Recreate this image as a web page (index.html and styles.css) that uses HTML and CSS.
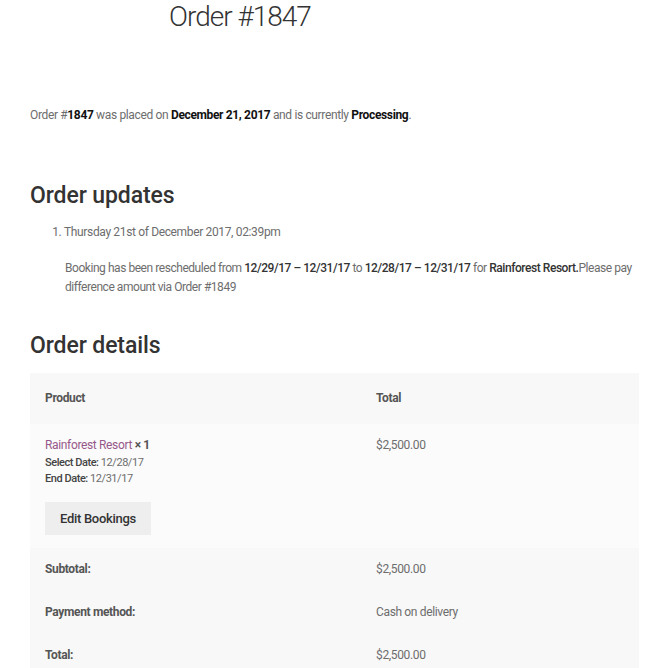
FILE: index.html
```html
<!DOCTYPE html>
<html lang="en">

<head>
    <meta charset="UTF-8">
    <meta name="viewport" content="width=device-width, initial-scale=1.0">
    <title>Order #1847</title>
    <link rel="stylesheet" href="styles.css">
</head>

<body>

    <header class="entry-header">
        <h1 class="entry-title">Order #1847</h1>
    </header>

    <div class="entry-content">
        <p class="order-status">Order #<mark>1847</mark> was placed on <mark>December 21, 2017</mark> and is currently <mark>Processing</mark>.</p>

        <h2 class="section-title">Order updates</h2>
        <ol class="order-notes">
            <li class="note">
                <p class="note-meta">Thursday 21st of December 2017, 02:39pm</p>
                <p class="note-text">Booking has been rescheduled from <strong>12/29/17 &ndash; 12/31/17</strong> to <strong>12/28/17 &ndash; 12/31/17</strong> for <strong>Rainforest Resort.</strong>Please pay difference amount via Order #1849</p>
            </li>
        </ol>

        <h2 class="section-title section-title--details">Order details</h2>
        <table class="order-table">
            <thead>
                <tr>
                    <th class="col-product">Product</th>
                    <th class="col-total">Total</th>
                </tr>
            </thead>
            <tbody>
                <tr class="order-item">
                    <td>
                        <a href="#" class="product-link">Rainforest Resort</a> <strong class="qty">&times;&nbsp;1</strong>
                        <ul class="item-meta">
                            <li><strong>Select Date:</strong> 12/28/17</li>
                            <li><strong>End Date:</strong> 12/31/17</li>
                        </ul>
                        <button type="button" class="btn">Edit Bookings</button>
                    </td>
                    <td><span class="amount">$2,500.00</span></td>
                </tr>
            </tbody>
            <tfoot>
                <tr>
                    <th>Subtotal:</th>
                    <td><span class="amount">$2,500.00</span></td>
                </tr>
                <tr>
                    <th>Payment method:</th>
                    <td>Cash on delivery</td>
                </tr>
                <tr>
                    <th>Total:</th>
                    <td><span class="amount">$2,500.00</span></td>
                </tr>
            </tfoot>
        </table>
    </div>

</body>

</html>
```

FILE: styles.css
```css
/* General Styles */
* {
    margin: 0;
    padding: 0;
    box-sizing: border-box;
}

body {
    font-family: "Roboto", "Noto Sans", sans-serif;
    font-size: 12px;
    line-height: 19px;
    letter-spacing: -0.35px;
    color: #6d6d6d;
    background: #fff;
    padding: 0 7px 0 30px;
}

strong, mark {
    background: none;
    font-weight: 700;
    color: #333;
}

/* Page title */
.entry-title {
    font-weight: 300;
    font-size: 28px;
    line-height: 36px;
    letter-spacing: -1px;
    color: #333;
    margin-left: 139px;
    margin-top: -1px;
}

.order-status {
    margin-top: 71px;
}

.order-status mark {
    color: #111;
}

/* Section headings */
.section-title {
    font-size: 23px;
    line-height: 30px;
    font-weight: 500;
    letter-spacing: -0.1px;
    color: #333;
    margin-top: 56px;
}

.section-title--details {
    margin-top: 34px;
}

/* Order notes */
.order-notes {
    margin: 12px 0 0 34px;
}

.note-text {
    margin: 17px -5px 0 1px;
    letter-spacing: -0.45px;
}

.note-text strong {
    font-weight: 500;
}

/* Order table */
.order-table {
    width: 100%;
    margin-top: 12px;
    border-collapse: collapse;
    border-spacing: 0;
}

.order-table th,
.order-table td {
    text-align: left;
    vertical-align: top;
    padding: 12px 15px;
}

.order-table thead th {
    background: #f8f8f8;
    padding: 16px 15px;
    font-weight: 700;
    color: #555;
}

.col-product {
    width: 331px;
}

.order-table tbody td {
    background: #fbfbfb;
    padding-bottom: 13px;
}

.order-table tfoot th,
.order-table tfoot td {
    background: #f8f8f8;
}

.order-table tfoot th {
    font-weight: 700;
    color: #555;
}

.product-link {
    color: #96588a;
    text-decoration: none;
}

.qty {
    color: #555;
}

.item-meta {
    list-style: none;
    font-size: 11px;
    line-height: 16px;
    letter-spacing: -0.45px;
}

.item-meta strong {
    font-weight: 500;
    color: #444;
}

/* Button */
.btn {
    display: block;
    margin-top: 15px;
    height: 33px;
    padding: 0 15px;
    border: none;
    background: #eeeeee;
    color: #333;
    font-family: inherit;
    font-size: 13px;
    font-weight: 500;
    letter-spacing: -0.3px;
    cursor: pointer;
}

.btn:hover {
    background: #d5d5d5;
}
```
